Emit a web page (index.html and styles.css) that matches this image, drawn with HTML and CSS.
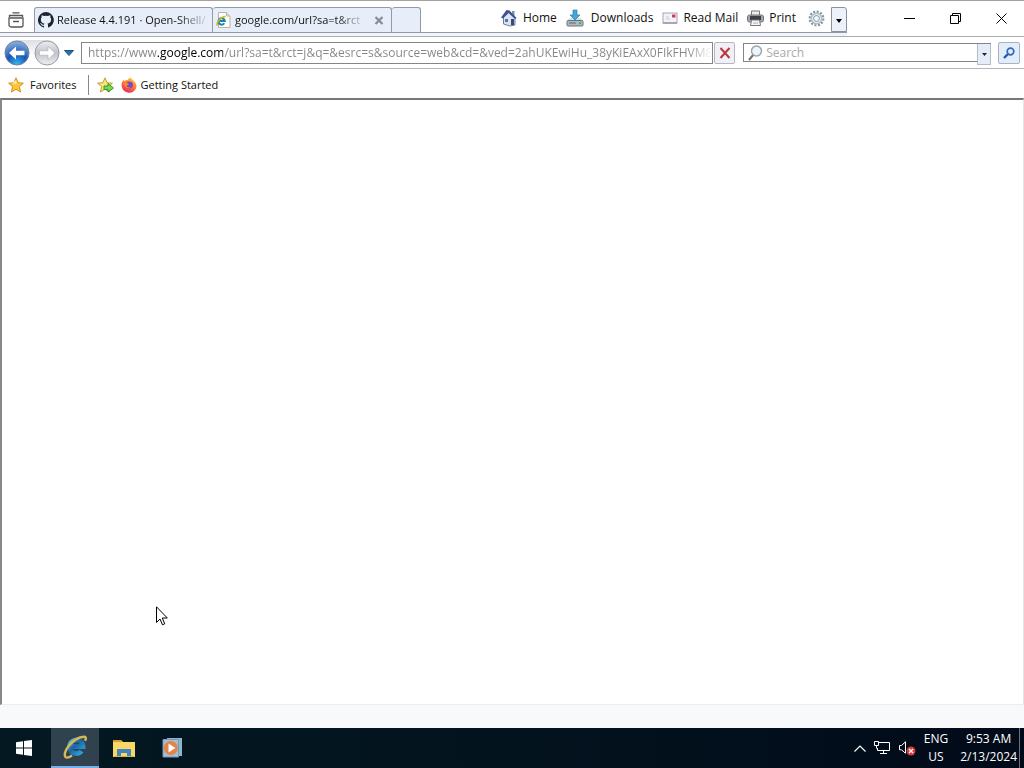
FILE: index.html
```
<!DOCTYPE html>
<html lang="en">
<head>
<meta charset="utf-8">
<title>google.com</title>
<link rel="stylesheet" href="styles.css">
</head>
<body>
<div class="screen">
  <header class="titlebar">
    <div class="strip">
      <button class="plain recent" aria-label="Recent tabs"><svg width="16" height="16" viewBox="0 0 16 16" fill="none" stroke="#555" stroke-width="1.3"><path d="M4.500.800h7M1.500 5V3.500h13V5"/><path d="M1 6h14v7a2 2 0 0 1-2 2H3a2 2 0 0 1-2-2zM5 9.500h6"/></svg></button>
      <nav class="tabs">
        <a class="tab" href="#"><svg width="16" height="16" viewBox="0 0 16 16"><path fill="#1c2430" d="M8 0a8 8 0 0 0-2.5 15.6c.4.1.5-.2.5-.4v-1.500c-2.200.5-2.700-1-2.700-1-.4-.9-.9-1.200-.9-1.200-.7-.5.1-.5.1-.5.8.1 1.200.8 1.200.8.7 1.300 1.900.9 2.300.7.1-.5.3-.9.5-1.100-1.800-.2-3.600-.9-3.600-4 0-.9.3-1.600.8-2.100-.1-.2-.4-1 .1-2.100 0 0 .7-.2 2.200.8a7.500 7.500 0 0 1 4 0c1.500-1 2.200-.8 2.200-.8.4 1.100.1 1.900.1 2.100.5.600.8 1.300.8 2.100 0 3.100-1.900 3.800-3.700 4 .3.300.6.800.6 1.500v2.200c0 .2.1.500.6.400A8 8 0 0 0 8 0z"/></svg><span class="tab-text">Release 4.4.191 · Open-Shell/</span></a>
        <div class="tab current"><svg width="15" height="16" viewBox="0 0 15 16"><path d="M2.500.5h8l3.500 3.500v11.500H2.500z" fill="#fffef5" stroke="#b5b5ad"/><path d="M10.500.5V4H14" fill="#ddd" stroke="#b5b5ad"/><path d="M8.300 11.200A3.200 3.200 0 1 1 8.800 9H3" fill="none" stroke="#1687b5" stroke-width="2"/><path d="M1.500 13.500C-.5 11.500 5 4.500 9.500 4.500" fill="none" stroke="#d4b322" stroke-width="1.600"/></svg><span class="tab-text">google.com/url?sa=t&amp;rct</span><button class="plain tab-close" aria-label="Close tab"><svg width="10" height="9" viewBox="0 0 10 9"><path d="M1.500 1l7 7M8.500 1l-7 7" stroke="#858c98" stroke-width="2.200"/></svg></button></div>
        <button class="tab new-tab" aria-label="New tab"></button>
      </nav>
      <nav class="commands">
        <a href="#"><svg width="18" height="18" viewBox="0 0 18 18"><path d="M12 2h2.500v5H12z" fill="#7c8fb6"/><path d="M3.500 8L9 3l6 5v8l-5 1-6.500-2z" fill="#dce4ee" stroke="#6e7c99"/><path d="M1 8.500L6.500 1l3 .5L16.500 9 15 10 8.500 4 3 9.500z" fill="#3f5190"/><path d="M11 10h3v6h-3z" fill="#304c83"/><path d="M5 10h3v3H5z" fill="#4f78b8"/></svg><span>Home</span></a>
        <a href="#"><svg width="18" height="18" viewBox="0 0 18 18"><path d="M3.500 9h11L17 12H1z" fill="#d8dee2"/><rect x="1" y="11.500" width="16" height="5.500" rx="1" fill="#aeb8be" stroke="#68757d"/><path d="M3 14h7" stroke="#5f6b74"/><path d="M13 14h2" stroke="#2fbd63" stroke-width="2"/><path d="M7 1h4v5h3L9 11 4 6h3z" fill="#44a6dd" stroke="#277fac" stroke-width=".7"/></svg><span>Downloads</span></a>
        <a href="#"><svg width="16" height="12" viewBox="0 0 16 12"><rect x="1" y="1" width="14" height="10" fill="#f3f3f7" stroke="#a9a4b5"/><path d="M1 11h14" stroke="#8c7989"/><path d="M10 2.500h3.500v3H10z" fill="#d13c55"/><path d="M4 5h3M4 7h4" stroke="#c6cbd8"/></svg><span>Read Mail</span></a>
        <a href="#"><svg width="17" height="17" viewBox="0 0 17 17"><path d="M4.500 1h8v5h-8z" fill="#eee" stroke="#777"/><rect x=".5" y="5" width="16" height="7" rx="2" fill="#a3a8ad" stroke="#777"/><path d="M3 6h11v4H3z" fill="#3c4147"/><path d="M4.500 10h8l1 5.500h-10z" fill="#f7f7f7" stroke="#777"/><path d="M6 13h5" stroke="#aaa"/></svg><span>Print</span></a>
        <button class="plain gear" aria-label="Tools"><svg width="17" height="17" viewBox="0 0 17 17" fill="none"><circle cx="8.500" cy="8.500" r="6.800" stroke="#7f929c" stroke-width="2.200" stroke-dasharray="2 1.560"/><circle cx="8.500" cy="8.500" r="5.200" stroke="#aec2cb" stroke-width="1.800"/><circle cx="8.500" cy="8.500" r="3" stroke="#7f929c" stroke-width="1" fill="#f1f5f8"/></svg></button>
      </nav>
      <button class="more" aria-label="More tools"><svg width="6" height="4" viewBox="0 0 6 4"><path d="M0 0h6L3 4z"/></svg></button>
    </div>
    <div class="window-buttons">
      <button class="plain" aria-label="Minimize"><svg width="11" height="11" viewBox="0 0 11 11"><path d="M0 5.500h11" stroke="#000"/></svg></button>
      <button class="plain" aria-label="Restore"><svg width="11" height="11" viewBox="0 0 11 11" fill="none" stroke="#000"><path d="M.5 2.500h8v8h-8zM2.500 2.500v-2h8v8h-2"/></svg></button>
      <button class="plain" aria-label="Close"><svg width="11" height="11" viewBox="0 0 11 11"><path d="M.5.5l10 10M10.500.5l-10 10" stroke="#000"/></svg></button>
    </div>
  </header>
  <div class="navbar">
    <div class="history">
      <button class="plain" aria-label="Back"><svg width="26" height="26" viewBox="0 0 26 26"><defs><radialGradient id="blue" cx=".5" cy=".95" r=".95"><stop offset="0" stop-color="#35b5f0"/><stop offset=".45" stop-color="#1a55b4"/><stop offset="1" stop-color="#8fb6e2"/></radialGradient></defs><circle cx="13" cy="13" r="12" fill="url(#blue)" stroke="#6f819e"/><path d="M5 13l7-6.500v4.300h8.500v4.400H12v4.300z" fill="#fff"/></svg></button>
      <button class="plain" aria-label="Forward"><svg width="26" height="26" viewBox="0 0 26 26"><defs><linearGradient id="grey" x2="0" y2="1"><stop stop-color="#eceef1"/><stop offset=".5" stop-color="#bfc4ca"/><stop offset="1" stop-color="#eef0f2"/></linearGradient></defs><circle cx="13" cy="13" r="12" fill="url(#grey)" stroke="#999da3"/><path d="M21 13l-7-6.500v4.300H5.500v4.400H14v4.300z" fill="#fff" stroke="#b0b5bb" stroke-width=".7"/></svg></button>
    </div>
    <button class="plain history-menu" aria-label="Page history"><svg width="10" height="6" viewBox="0 0 10 6"><path d="M.5.5h9L5 5.500z" fill="#1e78b4" stroke="#24517c"/></svg></button>
    <input class="address" type="text" aria-label="Address" value="https://www.google.com/url?sa=t&amp;rct=j&amp;q=&amp;esrc=s&amp;source=web&amp;cd=&amp;ved=2ahUKEwiHu_38yKiEAxX0FIkFHVM8D">
    <button class="stop" aria-label="Stop"><svg width="12" height="12" viewBox="0 0 12 12"><path d="M1.500 1l9 10M10.500 1l-9 10" stroke="#bd353c" stroke-width="2"/></svg></button>
    <div class="search">
      <svg width="15" height="16" viewBox="0 0 15 16"><path d="M5.500 9.500L1 15" stroke="#77705f" stroke-width="2"/><circle cx="8.500" cy="6" r="5" fill="#edf5fa" stroke="#98a2aa" stroke-width="1.400"/></svg>
      <input type="text" aria-label="Search" placeholder="Search">
      <button class="engine" aria-label="Search engines"><svg width="5" height="3" viewBox="0 0 5 3"><path d="M0 0h5L2.500 3z" fill="#223"/></svg></button>
    </div>
    <button class="go" aria-label="Go"><svg width="12" height="12" viewBox="0 0 12 12"><path d="M5 7L1 11" stroke="#2355b5" stroke-width="2.400"/><circle cx="7.500" cy="4.500" r="3.300" fill="#e4effc" stroke="#3468c0" stroke-width="1.700"/></svg></button>
  </div>
  <nav class="favorites">
    <button class="plain fav"><svg width="16" height="16" viewBox="0 0 16 16"><path d="M8 .8l2.100 4.900 5.300.5-4 3.500 1.200 5.300L8 12.200 3.400 15l1.200-5.300-4-3.500 5.300-.5z" fill="#fcc53b" stroke="#d99218"/><path d="M8 3l1 3.500-5 .5z" fill="#fff0a6"/></svg><span>Favorites</span></button>
    <button class="plain add" aria-label="Add to favorites"><svg width="17" height="16" viewBox="0 0 17 16"><path d="M8 .8l2.100 4.900 5.300.5-4 3.500 1.200 5.300L8 12.200 3.400 15l1.200-5.300-4-3.500 5.300-.5z" fill="#f8e778" stroke="#c1a02a"/><path d="M7 9h4V6.500L16.500 11 11 15v-2.500H7z" fill="#78d94d" stroke="#3b9431"/></svg></button>
    <a class="bookmark" href="#"><svg width="16" height="16" viewBox="0 0 16 16"><defs><linearGradient id="fire" x1=".8" x2=".3" y2="1"><stop stop-color="#ffd53c"/><stop offset=".5" stop-color="#ff7a30"/><stop offset="1" stop-color="#e92463"/></linearGradient></defs><path d="M2.500 3l1.300 1.200C4.800 3 6 3 6.500 3.200 7.500 1.500 9 .8 10 .5c0 1.500 1.500 2 3 3.500 3 2.800 3 6 1.500 8.200A7.500 7.500 0 0 1 .8 9.500C.3 7 1 4.500 2.500 3z" fill="url(#fire)"/><circle cx="8.500" cy="8" r="3.400" fill="#7947c9"/><path d="M3 6.500c2-1 4-.5 5 .8L5.500 9c.5 1.500 3 2 4.500 1-1 2-6 2-7-3.500z" fill="#ff8a2a"/></svg><span>Getting Started</span></a>
  </nav>
  <main class="page"></main>
  <div class="status"></div>
  <footer class="taskbar">
    <div class="apps">
      <button class="plain" aria-label="Start"><svg width="16" height="16" viewBox="0 0 16 16" fill="#fff"><path d="M0 2.300L7 1.300V7.500H0zM8 1.100L16 0v7.500H8zM0 8.500h7v6.200l-7-1zM8 8.500h8V16l-8-1.100z"/></svg></button>
      <button class="plain running" aria-label="Internet Explorer"><svg width="26" height="24" viewBox="0 0 26 24"><defs><linearGradient id="ie" x2="1" y2="1"><stop stop-color="#6fb9d8"/><stop offset=".4" stop-color="#1a64a3"/><stop offset="1" stop-color="#2fa6e0"/></linearGradient></defs><path d="M19.500 16a6.700 6.700 0 1 1 1.500-4.500H10" fill="none" stroke="url(#ie)" stroke-width="4.800"/><path d="M4 22.500C-1 19 10 2.500 22 1.800c2-.1 2.500 1.200 1 4M4 22.500c2 .5 4-.5 6-2" fill="none" stroke="#d6b955" stroke-width="2.400"/></svg></button>
      <button class="plain" aria-label="File Explorer"><svg width="22" height="19" viewBox="0 0 22 19"><path d="M0 1h8l2 2h12v15H0z" fill="#fbd766"/><path d="M0 1h8l1 2H0z" fill="#d79b29"/><path d="M4 10h14v8h-4v-4H8v4H4z" fill="#4186bd"/><path d="M1 17.500h20" stroke="#e3b03c"/></svg></button>
      <button class="plain" aria-label="Media Player"><svg width="21" height="20" viewBox="0 0 21 20"><path d="M5 0h15v18H5z" fill="#8fb7cb"/><path d="M1 1.500h15.500v17.500H1z" fill="#aabed0" stroke="#6f9ab8"/><circle cx="8.800" cy="10" r="7" fill="#e2834a"/><path d="M6.500 5.500l7 4.500-7 4.500z" fill="#fff"/></svg></button>
    </div>
    <div class="tray">
      <button class="plain" aria-label="Show hidden icons"><svg width="12" height="7" viewBox="0 0 12 7"><path d="M.5 6.500L6 1l5.500 5.500" fill="none" stroke="#fff" stroke-width="1.200"/></svg></button>
      <button class="plain" aria-label="Network"><svg width="17" height="14" viewBox="0 0 17 14" fill="none" stroke="#fff"><path d="M5 1.500h10.500v8h-12V7M9.500 10v3M6 12.500h7M.5.500h4v4h-4zM2.500 4.500v3"/></svg></button>
      <button class="plain" aria-label="Volume"><svg width="17" height="15" viewBox="0 0 17 15"><path d="M.5 4.500h2L6.500.8v11.500l-4-3.500h-2z" fill="none" stroke="#fff"/><circle cx="12" cy="10" r="4.500" fill="#d63b3b"/><path d="M10 8l4 4M14 8l-4 4" stroke="#fff" stroke-width="1.200"/></svg></button>
      <button class="plain lang">ENG<br>US</button>
      <button class="plain clock">9:53 AM<br>2/13/2024</button>
      <button class="plain desktop" aria-label="Show desktop"></button>
    </div>
  </footer>
  <svg class="cursor" width="12" height="20" viewBox="0 0 12 20"><path d="M.5.8v15.700L4 13l2.500 5.800 2.200-1L6.300 12h5z" fill="#fff" stroke="#000"/></svg>
</div>
</body>
</html>
```
FILE: styles.css
```
* { box-sizing: border-box; }
body { margin: 0; background: #fff; color: #111; font: 12px/16px "Open Sans", "Noto Sans", sans-serif; }
svg { display: block; flex: none; }
a { color: inherit; text-decoration: none; }
button, input { font: inherit; color: inherit; }
button { padding: 0; display: flex; align-items: center; justify-content: center; }
.plain { border: 0; background: none; }
.screen { position: relative; height: 100vh; display: flex; flex-direction: column; overflow: hidden; }
.titlebar { flex: none; height: 37px; display: flex; justify-content: space-between; align-items: flex-start; border-top: 1px solid #a2a2a2; border-bottom: 1px solid #a9acb5; }
.strip { flex: 0 1 847px; min-width: 0; height: 32px; padding-top: 6px; display: flex; align-items: flex-end; border-bottom: 1px solid #9499a6; box-shadow: 0 3px #f2f4fa; }
.recent { width: 32px; height: 25px; }
.tabs { display: flex; height: 25px; margin-left: 2px; font-size: 11px; }
.tab { display: flex; align-items: center; gap: 3px; width: 179px; padding: 0 2px 0 3px; border: 1px solid #9199aa; border-bottom: 0; border-radius: 3px 3px 0 0; background: #e7eef9; }
.tab + .tab { border-left: 0; }
.tab.current { gap: 4px; padding-right: 4px; }
.tab-text { flex: 1; min-width: 0; overflow: hidden; white-space: nowrap; -webkit-mask-image: linear-gradient(to right, #000 calc(100% - 32px), transparent); mask-image: linear-gradient(to right, #000 calc(100% - 32px), transparent); }
.tab-close { width: 16px; height: 16px; }
.tab.new-tab { width: 29px; }
.commands { flex: 1; display: flex; align-items: center; justify-content: flex-end; gap: 9px; height: 24px; padding: 0 6px 4px 0; white-space: nowrap; }
.commands a { display: flex; align-items: center; gap: 5px; }
.commands a:nth-child(2) { gap: 7px; }
.gear { margin-left: 3px; }
.more { width: 16px; height: 25px; padding-top: 2px; border: 1px solid #8d939e; border-radius: 0 3px 0 0; background: #edf1fa; }
.window-buttons { display: flex; }
.window-buttons button { width: 46px; height: 35px; }
.navbar { flex: none; height: 32px; display: flex; align-items: center; padding: 0 4px; border-bottom: 1px solid #b4b4b4; }
.history { display: flex; gap: 4px; border-radius: 13px; background: linear-gradient(#dedfe3, #fff 60%); }
.history-menu { width: 10px; margin: 0 7px 0 4px; }
.address { flex: 635 1 0; min-width: 0; height: 22px; padding: 0 0 0 6px; border: 1px solid #858585; border-radius: 0; background: linear-gradient(to right, #858585 75px, #000 75px 141px, #858585 141px calc(100% - 24px), #fff) text; -webkit-text-fill-color: transparent; }
.stop { width: 21px; height: 22px; margin: 0 8px 0 1px; border: 1px solid #b6b6be; border-radius: 2px; background: #f0f0f6; }
.search { flex: 246 1 0; min-width: 0; height: 19px; display: flex; align-items: center; padding-left: 4px; border: 1px solid #858585; }
.search input { flex: 1; min-width: 0; width: 0; height: 17px; padding: 0 3px; border: 0; background: none; }
.search input::placeholder { color: #aaa; opacity: 1; }
.engine { width: 14px; height: 21px; border: 1px solid #b3bccb; border-top: 0; background: #e5ebf7; align-self: flex-start; margin-right: -1px; }
.go { width: 22px; height: 22px; margin-left: 7px; border: 1px solid #a6b3c9; border-radius: 2px; background: #e3edf9; }
.favorites { flex: none; height: 29px; display: flex; align-items: center; padding: 2px 8px 0; font-size: 11px; }
.fav { height: 20px; gap: 6px; padding-right: 11px; border-right: 1px solid #888; }
.add { margin-left: 8px; }
.bookmark { display: flex; align-items: center; gap: 4px; margin-left: 7px; }
.page { flex: 1; border-top: 2px solid #777; border-left: 2px solid #888; border-right: 1px solid #e4e4e8; border-bottom: 1px solid #ededf0; }
.status { flex: none; height: 23px; background: #f8f9fb; }
.taskbar { flex: none; height: 40px; display: flex; justify-content: space-between; background: linear-gradient(to right, #031821, #03131e 50%, #010a19); color: #fff; }
.apps, .tray { display: flex; align-items: stretch; }
.apps button { width: 48px; }
.apps .running { margin: 0 1px 0 3px; background: #30424d; border-bottom: 2px solid #76b0e8; }
.tray { gap: 8px; align-items: center; }
.lang, .clock { line-height: 18px; }
.clock { margin-left: 4px; }
.desktop { width: 5px; height: 40px; margin-left: -6px; border-left: 1px solid #69717b; }
.cursor { position: absolute; left: 156px; top: 606px; }
```
